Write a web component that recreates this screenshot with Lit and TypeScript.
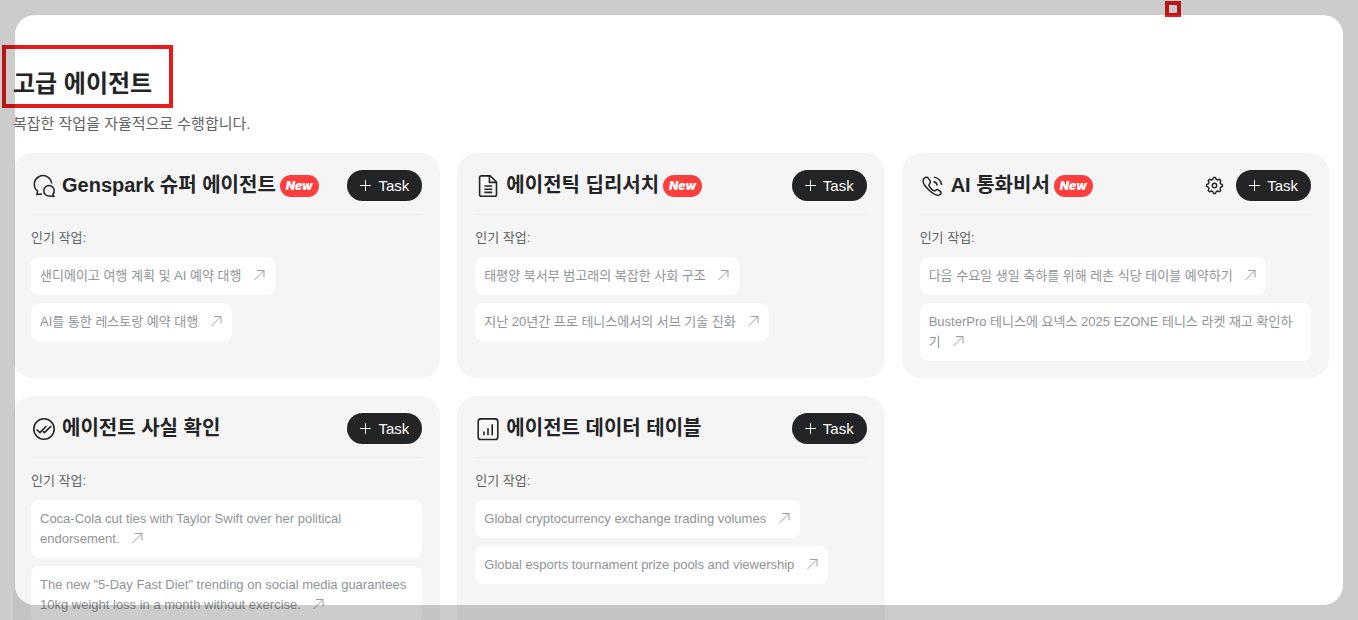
import { LitElement, html, css, svg, TemplateResult } from "lit";
import { customElement, property } from "lit/decorators.js";

type IconName = "chat" | "doc" | "phone" | "check" | "chart";

interface Agent {
  icon: IconName;
  title: string;
  isNew?: boolean;
  settings?: boolean;
  tasks: string[];
}

const AGENTS: Agent[] = [
  {
    icon: "chat",
    title: "Genspark 슈퍼 에이전트",
    isNew: true,
    tasks: ["샌디에이고 여행 계획 및 AI 예약 대행", "AI를 통한 레스토랑 예약 대행"],
  },
  {
    icon: "doc",
    title: "에이전틱 딥리서치",
    isNew: true,
    tasks: ["태평양 북서부 범고래의 복잡한 사회 구조", "지난 20년간 프로 테니스에서의 서브 기술 진화"],
  },
  {
    icon: "phone",
    title: "AI 통화비서",
    isNew: true,
    settings: true,
    tasks: [
      "다음 수요일 생일 축하를 위해 레촌 식당 테이블 예약하기",
      "BusterPro 테니스에 요넥스 2025 EZONE 테니스 라켓 재고 확인하기",
    ],
  },
  {
    icon: "check",
    title: "에이전트 사실 확인",
    tasks: [
      "Coca-Cola cut ties with Taylor Swift over her political endorsement.",
      'The new "5-Day Fast Diet" trending on social media guarantees 10kg weight loss in a month without exercise.',
    ],
  },
  {
    icon: "chart",
    title: "에이전트 데이터 테이블",
    tasks: [
      "Global cryptocurrency exchange trading volumes",
      "Global esports tournament prize pools and viewership",
    ],
  },
];

const ICONS: Record<IconName, TemplateResult> = {
  chat: svg`
    <g transform="translate(1.3 0.8) scale(0.95)">
      <path d="M20.3 10.2A9.1 9.1 0 1 0 5.6 18.2L4.7 21.9L10.4 21.2"/>
      <path d="M21.6 21.6A5.5 5.5 0 1 0 18.4 23.3L22.9 23.8Z"/>
    </g>`,
  doc: svg`
    <path d="M15.2 2.9H6.2A1.6 1.6 0 0 0 4.6 4.5V21.7A1.6 1.6 0 0 0 6.2 23.3H19.9A1.6 1.6 0 0 0 21.5 21.7V9Z"/>
    <path d="M14.4 3V9.4H21.4M9.4 13H17.2M9.4 16.2H17.2M9.4 19.4H17.2"/>`,
  phone: svg`
    <g transform="translate(0 0.8) scale(0.95)">
      <path d="M3.6 5.8C5.3 3.6 7.2 2.9 8.4 4.3L10.6 7.2C11.4 8.3 11.2 9.3 10.3 10.2C9.2 11.2 9 12.1 9.8 13.3C10.9 15 12.1 16.4 13.8 17.5C14.9 18.2 15.7 17.9 16.8 17.1C17.8 16.4 18.7 16.4 19.6 17.1L21.4 18.5C22.9 19.7 22.3 21.5 20.4 22.2C17.6 23.2 13.4 20.9 9.6 17.3C5.2 13.1 2.1 8.2 3.6 5.8Z"/>
      <path d="M14.2 8.2A5.4 5.4 0 0 1 18.2 12.3M14.6 3.5A10 10 0 0 1 22.8 11.7"/>
    </g>`,
  check: svg`
    <circle cx="13" cy="13" r="10.2"/>
    <path d="M5.6 13.5L8.9 16.6L15.2 10.2M12 15.2L13.4 16.6L20.2 10.2"/>`,
  chart: svg`
    <rect x="3.2" y="2.9" width="19.6" height="20.6" rx="2.6"/>
    <path d="M9 15.4V19.2M13 12.2V19.2M17.2 8.2V19.2"/>`,
};

/** Outline of a cog with eight flat teeth, centred in a 19-unit box. */
function cogOutline(): string {
  const at = (deg: number, r: number) => {
    const a = ((deg - 90) * Math.PI) / 180;
    return `${(9.5 + r * Math.cos(a)).toFixed(2)} ${(9.5 + r * Math.sin(a)).toFixed(2)}`;
  };
  const points: string[] = [];
  for (let tooth = 0; tooth < 8; tooth++) {
    const c = tooth * 45;
    points.push(at(c - 7, 8), at(c + 7, 8), at(c + 16, 6.3), at(c + 29, 6.3));
  }
  return `M${points.join("L")}Z`;
}

const COG = cogOutline();

@customElement("agent-card")
export class AgentCard extends LitElement {
  @property({ attribute: false }) agent!: Agent;

  static styles = css`
    :host {
      display: block;
      min-width: 0;
      box-sizing: border-box;
      padding: 17px 18px;
      border-radius: 20px;
      background: #f5f5f5;
      color: #232425;
    }
    .head {
      display: flex;
      align-items: center;
      padding-bottom: 13px;
      border-bottom: 1px solid #efefef;
    }
    .icon {
      flex: none;
      width: 26px;
      height: 26px;
      margin-right: 5px;
      fill: none;
      stroke: #232425;
      stroke-width: 1.6;
      stroke-linejoin: round;
    }
    .title {
      margin: 0;
      font-size: 20px;
      line-height: 31px;
      font-weight: 700;
      white-space: nowrap;
    }
    .badge {
      margin-left: 4px;
      padding: 0 6px;
      border-radius: 11px;
      background: #ff3d3d;
      color: #fff;
      font: italic 900 12px/22px Inter, "Liberation Sans", sans-serif;
    }
    .actions {
      display: flex;
      align-items: center;
      gap: 12px;
      margin-left: auto;
    }
    button {
      font-family: inherit;
      border: 0;
      cursor: pointer;
    }
    .gear {
      display: flex;
      padding: 0;
      background: none;
    }
    .gear-icon {
      width: 19px;
      height: 19px;
      fill: none;
      stroke: #232425;
      stroke-width: 1.4;
      stroke-linejoin: round;
    }
    .task {
      display: flex;
      align-items: center;
      gap: 7px;
      height: 31px;
      padding: 0 13px;
      border-radius: 16px;
      background: #232425;
      color: #fff;
      font-size: 15px;
    }
    .plus {
      width: 11px;
      height: 11px;
      stroke: #fff;
      stroke-width: 1;
    }
    .label {
      margin: 13px 0 9px;
      font-size: 13px;
      line-height: 20px;
      color: #606366;
    }
    .list {
      display: flex;
      flex-direction: column;
      align-items: flex-start;
      gap: 8px;
      margin: 0;
      padding: 0;
      list-style: none;
    }
    .chip {
      display: block;
      padding: 9px;
      border-radius: 8px;
      background: #fff;
      color: #909499;
      font-size: 13px;
      line-height: 20px;
      text-decoration: none;
    }
    .arrow {
      width: 12px;
      height: 12px;
      margin-left: 9px;
      vertical-align: -1px;
      fill: none;
      stroke: #909499;
      stroke-width: 0.9;
    }
  `;

  render() {
    const a = this.agent;
    return html`
      <header class="head">
        <svg class="icon" viewBox="0 0 26 26" aria-hidden="true">${ICONS[a.icon]}</svg>
        <h2 class="title">${a.title}</h2>
        ${a.isNew ? html`<span class="badge">New</span>` : ""}
        <div class="actions">
          ${a.settings
            ? html`<button class="gear" aria-label="설정">
                <svg class="gear-icon" viewBox="0 0 19 19" aria-hidden="true">
                  <path d=${COG} />
                  <circle cx="9.5" cy="9.5" r="2.2" />
                </svg>
              </button>`
            : ""}
          <button class="task">
            <svg class="plus" viewBox="0 0 11 11" aria-hidden="true"><path d="M5.5 0V11M0 5.5H11" /></svg>Task
          </button>
        </div>
      </header>
      <p class="label">인기 작업:</p>
      <ul class="list">
        ${a.tasks.map(
          (t) => html`<li>
            <a class="chip" href="#">${t} <svg class="arrow" viewBox="0 0 12 12" aria-hidden="true"><path d="M0.5 11L10 1.5M3 1.5H10V8.5" /></svg></a>
          </li>`
        )}
      </ul>
    `;
  }
}

@customElement("app-root")
export class AppRoot extends LitElement {
  static styles = css`
    :host {
      display: block;
      position: relative;
      box-sizing: border-box;
      height: 100vh;
      overflow: hidden;
      padding: 65px 29px 0 13px;
      background: #fff;
      color: #232425;
      font-family: "Liberation Sans", "Noto Sans CJK KR", sans-serif;
    }
    .heading {
      margin: 0;
      font-size: 24px;
      line-height: 38px;
      font-weight: 700;
    }
    .lead {
      margin: 10px 0 18px;
      font-size: 15px;
      line-height: 22px;
      color: #606366;
    }
    .grid {
      display: grid;
      grid-template-columns: repeat(3, minmax(0, 1fr));
      gap: 18px 17px;
    }
    .mark {
      position: absolute;
      box-sizing: border-box;
      border: 4px solid #e61c1c;
      pointer-events: none;
    }
    .mark-heading {
      left: 2px;
      top: 45px;
      width: 171px;
      height: 63px;
    }
    .mark-top {
      left: 1165px;
      top: 1px;
      width: 16px;
      height: 16px;
    }
    .veil {
      position: absolute;
      inset: 15px;
      border-radius: 20px;
      box-shadow: 0 0 0 40px rgba(0, 0, 0, 0.2);
      pointer-events: none;
    }
  `;

  render() {
    return html`
      <h1 class="heading">고급 에이전트</h1>
      <p class="lead">복잡한 작업을 자율적으로 수행합니다.</p>
      <main class="grid">${AGENTS.map((a) => html`<agent-card .agent=${a}></agent-card>`)}</main>
      <div class="mark mark-heading"></div>
      <div class="mark mark-top"></div>
      <div class="veil"></div>
    `;
  }
}
